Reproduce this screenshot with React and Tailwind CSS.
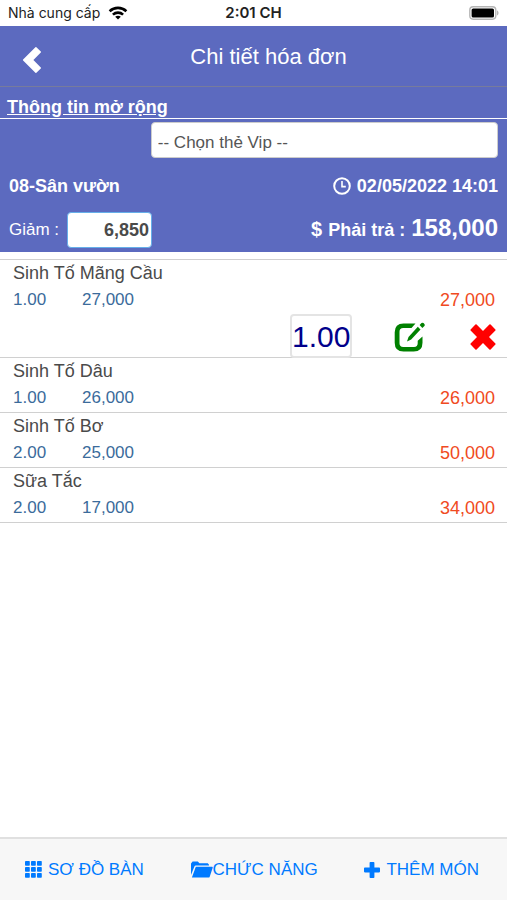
import React from 'react'

const items = [
    { id: 1, name: 'Sinh Tố Mãng Cầu', qty: '1.00', price: '27,000', total: '27,000', selected: true },
    { id: 2, name: 'Sinh Tố Dâu', qty: '1.00', price: '26,000', total: '26,000' },
    { id: 3, name: 'Sinh Tố Bơ', qty: '2.00', price: '25,000', total: '50,000' },
    { id: 4, name: 'Sữa Tắc', qty: '2.00', price: '17,000', total: '34,000' },
];

const WifiIcon = () => (
    <svg width="20" height="14" viewBox="0 0 20 14" fill="none" stroke="#000" strokeWidth="2.6">
        <path d="M1.6 5.2C6.4 .8 13.6 .8 18.4 5.2" />
        <path d="M4.9 8.6c2.9-2.6 7.3-2.6 10.2 0" />
        <path d="M10 13.6 7.2 10.8c1.5-1.4 4.1-1.4 5.6 0Z" fill="#000" stroke="none" />
    </svg>
)

const BatteryIcon = () => (
    <svg width="30" height="14" viewBox="0 0 30 14">
        <rect x=".8" y=".8" width="26" height="12.4" rx="3.4" fill="#fff" stroke="#b5b5b5" strokeWidth="1.4" />
        <rect x="2.6" y="2.4" width="22.4" height="9.2" rx="1.6" fill="#000" />
        <path d="M28 4.6c2 .6 2 4.2 0 4.8Z" fill="#b5b5b5" />
    </svg>
)

const BackIcon = () => (
    <svg width="20" height="28" viewBox="0 0 20 28" fill="#fff">
        <path d="M1.1 13.5 13.4 1.200q.5-.5 1 0l4.400 4.400q.5.5 0 1L11.400 14l7.400 7.400q.5.5 0 1l-4.400 4.400q-.5.5-1 0L1.100 14.500q-.5-.5 0-1Z" />
    </svg>
)

const ClockIcon = () => (
    <svg width="18" height="18" viewBox="0 0 18 18" fill="none" stroke="#fff">
        <circle cx="9" cy="9" r="7.8" strokeWidth="2" />
        <path d="M9 4v5.6h3.8" strokeWidth="1.6" />
    </svg>
)

const EditIcon = () => (
    <svg width="32" height="30" viewBox="0 0 32 30" fill="green">
        <path d="M21.500 1.500H9.500Q.7 1.500.7 10.300v10.400q0 8.800 8.800 8.800h10.200q8.800 0 8.800-8.800v-6.200l-4.800 4.300v2.400q0 3.700-3.700 3.700H9.200q-3.700 0-3.700-3.700V9.800q0-3.700 3.700-3.700h8.300Z" />
        <path d="m23.800 4.700 2.700 2.700-9.300 10.200-4.200 2 1.500-4.700Z" />
        <path d="m25.600 3 1.900-1.900q1-.9 2 0l.9.9q.9 1 0 2l-2 1.900Z" />
    </svg>
)

const RemoveIcon = () => (
    <svg width="26" height="26" viewBox="0 0 26 26" fill="red">
        <path d="M6.600.6 13 7 19.400.6q.6-.5 1.200 0l4.800 4.800q.5.6 0 1.200L19 13l6.400 6.400q.5.6 0 1.200l-4.800 4.800q-.6.5-1.200 0L13 19l-6.400 6.400q-.6.5-1.200 0L.6 20.600q-.5-.6 0-1.200L7 13 .6 6.600q-.5-.6 0-1.200L5.400.6q.6-.5 1.200 0Z" />
    </svg>
)

const GridIcon = () => (
    <svg width="17" height="17" viewBox="0 0 17 17" fill="currentColor">
        {[0, 6, 12].map((y) => [0, 6, 12].map((x) => (
            <rect key={`${x}-${y}`} x={x} y={y} width="4.800" height="4.800" rx=".8" />
        )))}
    </svg>
)

const FolderIcon = () => (
    <svg width="22" height="17" viewBox="0 0 22 17" fill="currentColor">
        <path d="M0 14V2.400L1.600.5h5.200L8.400 2.200h8.400l1.200 1.500v.9H4.800q-1 0-1.400.9Z" />
        <path d="M4.800 5.800H21q1 0 .7.900l-3 9q-.3.900-1.200.9H.9Z" />
    </svg>
)

const PlusIcon = () => (
    <svg width="16" height="16" viewBox="0 0 16 16" fill="currentColor">
        <path d="M6.400 0h3.200q.8 0 .8.800v4.800h4.800q.8 0 .8.800v3.200q0 .8-.8.800h-4.800v4.800q0 .8-.8.800H6.400q-.8 0-.8-.8v-4.800H.8q-.8 0-.8-.8V6.400q0-.8.8-.8h4.800V.8q0-.8.800-.8Z" />
    </svg>
)

const OrderItem = ({ item }) => {
    return (
        <li className="border-b border-[#d0d0d0] px-3">
            <h2 className="pl-px text-lg leading-[26px] text-[#4a4a4a]">{item.name}</h2>
            <div className="flex h-7 items-center text-[17px] text-[#3b6b9b]">
                <span className="w-[70px] pl-px">{item.qty}</span>
                <span>{item.price}</span>
                <span className="ml-auto text-lg text-[#f04a22]">{item.total}</span>
            </div>
            {item.selected && (
                <div className="flex h-[43px] items-start justify-end">
                    <input
                        type="text"
                        aria-label="Số lượng"
                        defaultValue={item.qty}
                        className="h-11 w-[62px] rounded-sm border-2 border-[#e4e4e4] text-center text-[30px] text-[#00008b]"
                    />
                    <button type="button" aria-label="Sửa" className="ml-[42px] mt-2">
                        <EditIcon />
                    </button>
                    <button type="button" aria-label="Xóa" className="-mr-px ml-11 mt-[10px]">
                        <RemoveIcon />
                    </button>
                </div>
            )}
        </li>
    )
}

const App = () => {
    return (
        <div className="flex min-h-screen flex-col bg-white font-['Liberation_Sans',Arial,sans-serif]">
            <div className="grid h-[26px] grid-cols-3 items-center px-2 font-['Inter',sans-serif] text-sm text-[#222]">
                <div className="flex items-center gap-2 whitespace-nowrap">
                    Nhà cung cấp
                    <WifiIcon />
                </div>
                <div className="text-center text-[15px] font-semibold">2:01 CH</div>
                <div className="flex justify-end">
                    <BatteryIcon />
                </div>
            </div>

            <header className="bg-[#5c6abf] text-white">
                <div className="flex h-[61px] items-center border-b border-[#777b9c] pl-[22px] pr-3">
                    <button type="button" aria-label="Quay lại" className="mt-2">
                        <BackIcon />
                    </button>
                    <h1 className="flex-1 text-center text-[22px]">Chi tiết hóa đơn</h1>
                </div>
                <div className="flex h-8 items-end border-b border-white px-[7px]">
                    <a href="#" className="text-lg leading-[22px] font-bold underline">Thông tin mở rộng</a>
                </div>

                <div className="px-[9px] pb-1 pt-[3px]">
                    <div className="flex justify-end">
                        <select aria-label="Thẻ Vip" className="h-9 w-[71%] appearance-none rounded border border-[#ccc] bg-white px-1.5 pt-1.5 text-[17px] text-[#555]">
                            <option>-- Chọn thẻ Vip --</option>
                        </select>
                    </div>
                    <div className="flex h-[54px] items-center justify-between pt-0.5 text-lg font-bold">
                        <span>08-Sân vườn</span>
                        <span className="flex items-center gap-1.5">
                            <ClockIcon />
                            02/05/2022 14:01
                        </span>
                    </div>
                    <div className="flex h-9 items-center">
                        <label htmlFor="discount" className="text-[17px]">Giảm :</label>
                        <input
                            id="discount"
                            type="text"
                            defaultValue="6,850"
                            className="ml-2 h-9 w-[85px] rounded border border-[#66afe9] bg-white pr-0.5 text-right text-lg font-bold text-[#4a4a4a]"
                        />
                        <div className="ml-auto flex items-baseline gap-1.5 pb-1 font-bold">
                            <span className="text-xl">$</span>
                            <span className="text-lg">Phải trả :</span>
                            <span className="text-2xl">158,000</span>
                        </div>
                    </div>
                </div>
            </header>

            <main className="flex-1 pt-[7px]">
                <ul className="border-t border-[#d0d0d0]">
                    {items.map((item) => (
                        <OrderItem key={item.id} item={item} />
                    ))}
                </ul>
            </main>

            <nav className="flex h-[63px] items-center justify-between border-t-2 border-[#e0e0e0] bg-[#f7f7f7] pl-[25px] pr-7 text-[17px] text-[#007aff]">
                <button type="button" className="flex items-center gap-1.5">
                    <GridIcon />
                    SƠ ĐỒ BÀN
                </button>
                <button type="button" className="flex items-center">
                    <FolderIcon />
                    CHỨC NĂNG
                </button>
                <button type="button" className="flex items-center gap-1.5">
                    <PlusIcon />
                    THÊM MÓN
                </button>
            </nav>
        </div>
    )
}

export default App
